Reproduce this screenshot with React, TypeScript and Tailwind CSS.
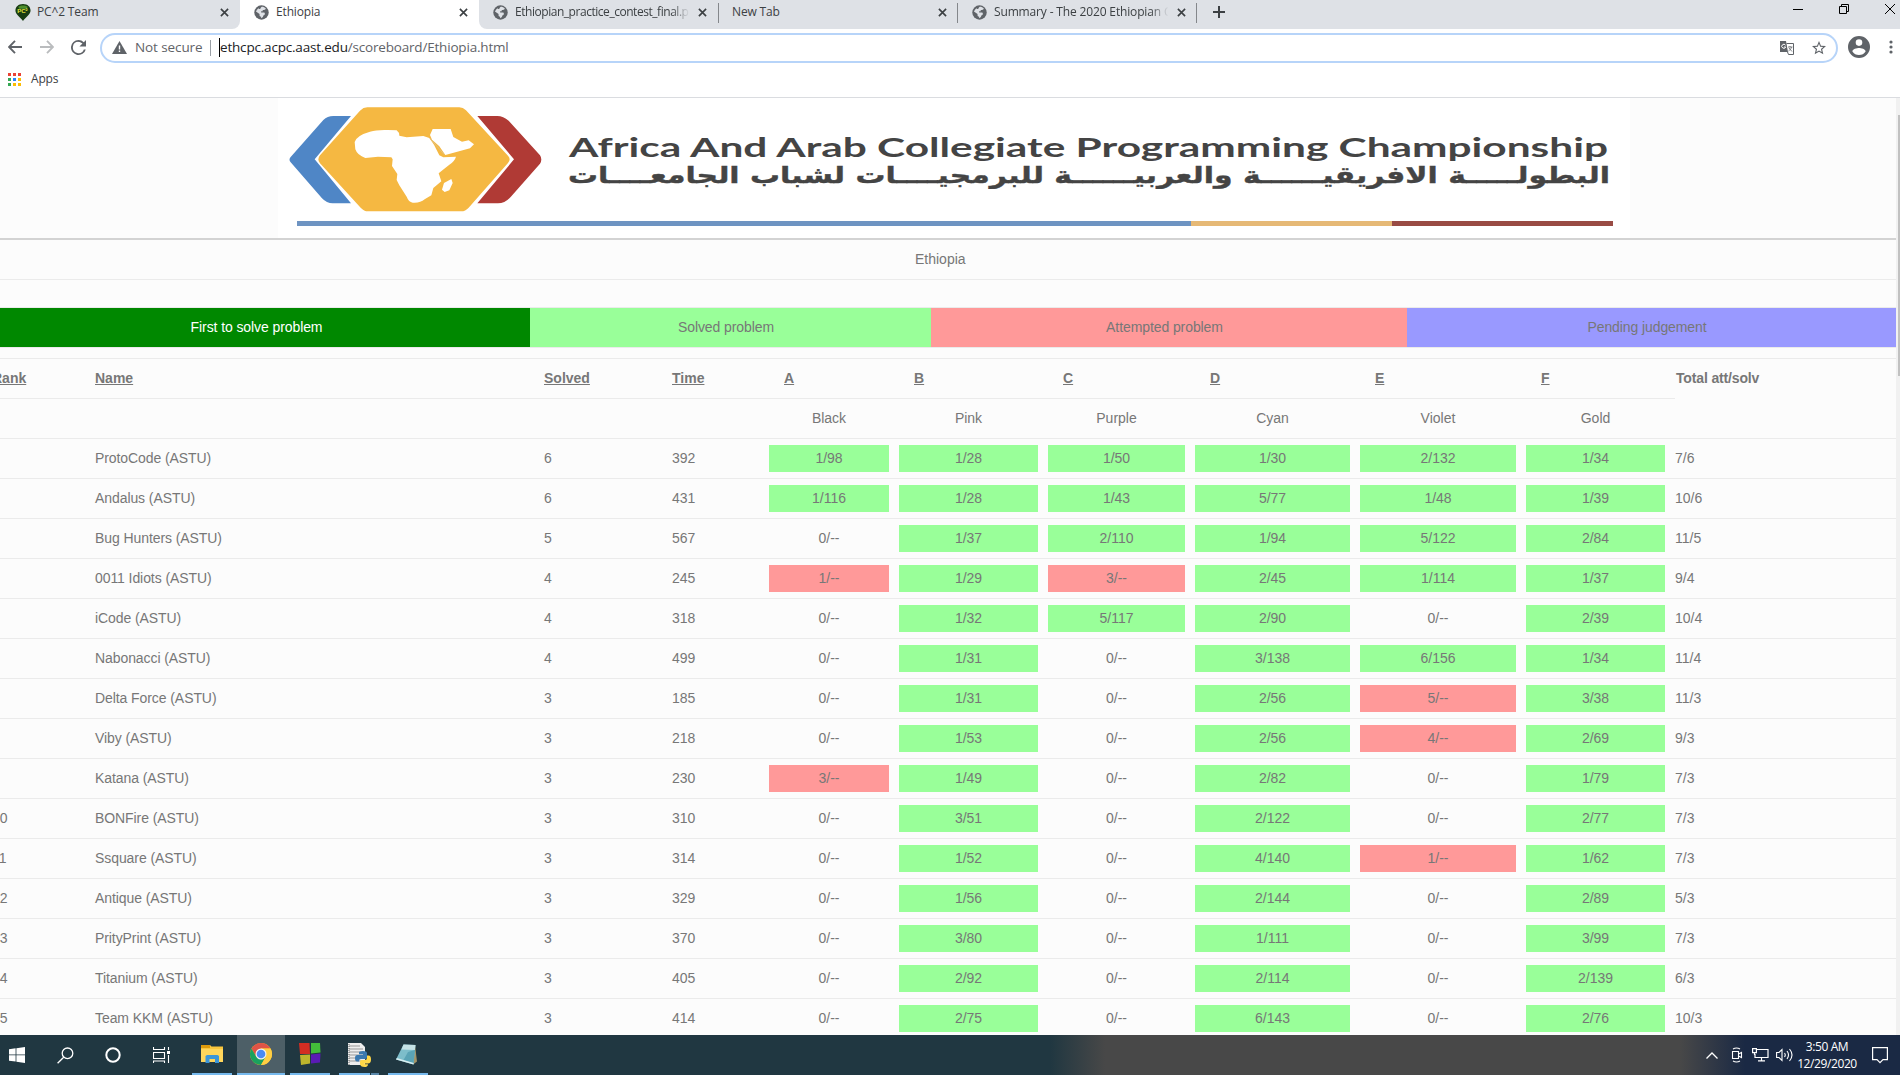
import React from "react";

type Row = [string, string, string, string, string[], string];

// A leading "!" marks an attempted but unsolved problem.
const rows: Row[] = [
  ["1", "ProtoCode (ASTU)", "6", "392", ["1/98", "1/28", "1/50", "1/30", "2/132", "1/34"], "7/6"],
  ["2", "Andalus (ASTU)", "6", "431", ["1/116", "1/28", "1/43", "5/77", "1/48", "1/39"], "10/6"],
  ["3", "Bug Hunters (ASTU)", "5", "567", ["0/--", "1/37", "2/110", "1/94", "5/122", "2/84"], "11/5"],
  ["4", "0011 Idiots (ASTU)", "4", "245", ["!1/--", "1/29", "!3/--", "2/45", "1/114", "1/37"], "9/4"],
  ["5", "iCode (ASTU)", "4", "318", ["0/--", "1/32", "5/117", "2/90", "0/--", "2/39"], "10/4"],
  ["6", "Nabonacci (ASTU)", "4", "499", ["0/--", "1/31", "0/--", "3/138", "6/156", "1/34"], "11/4"],
  ["7", "Delta Force (ASTU)", "3", "185", ["0/--", "1/31", "0/--", "2/56", "!5/--", "3/38"], "11/3"],
  ["8", "Viby (ASTU)", "3", "218", ["0/--", "1/53", "0/--", "2/56", "!4/--", "2/69"], "9/3"],
  ["9", "Katana (ASTU)", "3", "230", ["!3/--", "1/49", "0/--", "2/82", "0/--", "1/79"], "7/3"],
  ["10", "BONFire (ASTU)", "3", "310", ["0/--", "3/51", "0/--", "2/122", "0/--", "2/77"], "7/3"],
  ["11", "Ssquare (ASTU)", "3", "314", ["0/--", "1/52", "0/--", "4/140", "!1/--", "1/62"], "7/3"],
  ["12", "Antique (ASTU)", "3", "329", ["0/--", "1/56", "0/--", "2/144", "0/--", "2/89"], "5/3"],
  ["13", "PrityPrint (ASTU)", "3", "370", ["0/--", "3/80", "0/--", "1/111", "0/--", "3/99"], "7/3"],
  ["14", "Titanium (ASTU)", "3", "405", ["0/--", "2/92", "0/--", "2/114", "0/--", "2/139"], "6/3"],
  ["15", "Team KKM (ASTU)", "3", "414", ["0/--", "2/75", "0/--", "6/143", "0/--", "2/76"], "10/3"],
];

const cols =
  "grid grid-cols-[103px_449px_128px_97px_130px_149px_147px_165px_166px_149px_221px] items-center h-10 border-t border-[#ebebeb]";

function cellColor(v: string) {
  if (v.startsWith("!")) return "bg-[#ff9999]";
  if (v.startsWith("0/")) return "";
  return "bg-[#99ff99]";
}

function Globe() {
  return (
    <svg viewBox="0 0 16 16" className="size-[15px] shrink-0">
      <circle cx="8" cy="8" r="7.700" fill="#5f6368" />
      <path
        fill="#dee1e6"
        d="M8.300 1.900c1.700 0 3.200.7 4.300 1.800-.2.900-.9 1.500-1.900 1.500H9.300v1.400H7.600v1.500h2.700c.8 0 1.300.5 1.300 1.300 0 1.200-.9 1.600-1.600 1.900-.3 1.300-1 2.600-2.400 2.800v-1.700c-1.200 0-1.700-.7-1.700-1.700V9.500L2.100 6.800C2.600 5.600 3.600 4.400 4.700 3.500c.3.700 1 1 1.700.7.900-.4.700-1.800 1.900-2.300z"
      />
    </svg>
  );
}

function Close() {
  return (
    <svg viewBox="0 0 10 10" className="size-[9px] shrink-0" stroke="#3c4043" strokeWidth="1.800">
      <path d="M1 1l8 8M9 1L1 9" />
    </svg>
  );
}

function Tab({ title, icon, active, fade, tight }: { title: string; icon?: React.ReactNode; active?: boolean; fade?: boolean; tight?: boolean }) {
  return (
    <div className={active ? "flex h-full w-[239px] items-center bg-white pb-[5px] pl-[13px] pr-[11px]" : "flex h-full w-[239px] items-center pb-[5px] pl-[13px] pr-[11px]"}>
      {icon && <span className="mr-[6px] flex w-[17px] justify-center">{icon}</span>}
      <span
        className={
          fade
            ? "w-[178px] overflow-hidden whitespace-nowrap [mask-image:linear-gradient(to_right,black_88%,transparent_98%)]"
            : "flex-1 whitespace-nowrap"
        }
      >
        <span className={tight ? "tracking-[-0.46px]" : ""}>{title}</span>
      </span>
      <span className="ml-auto">
        <Close />
      </span>
    </div>
  );
}

function TabStrip() {
  return (
    <div className="flex h-[29px] items-center bg-[#dee1e6] text-[12px] tracking-[-0.15px] text-[#3c4043]">
      <div className="h-full bg-white">
        <div className="h-full rounded-br-lg bg-[#dee1e6] pl-px">
          <Tab
            title="PC^2 Team"
            icon={
              <svg viewBox="0 0 16 18" className="h-[17px] w-4">
                <path d="M8 0C3 0 0 3 0 7c0 4 5 7 8 11 3-4 8-7 8-11 0-4-3-7-8-7z" fill="#183c12" />
                <path d="M3 3c3-2 7-2 10 0l-1 2H4z" fill="#4d8f2c" />
                <text x="2" y="10" fontSize="6.500" fontWeight="700" fill="#e4e43a" fontFamily="Liberation Sans, sans-serif">PC²</text>
              </svg>
            }
          />
        </div>
      </div>
      <div className="h-full bg-white">
        <Tab title="Ethiopia" icon={<Globe />} active />
      </div>
      <div className="h-full bg-white">
        <div className="h-full rounded-bl-lg bg-[#dee1e6]">
          <Tab title="Ethiopian_practice_contest_final.pdf" icon={<Globe />} fade tight />
        </div>
      </div>
      <div className="mb-[4px] h-5 w-px bg-[#84878b]" />
      <div className="-mr-px h-full"><Tab title="New Tab" /></div>
      <div className="mb-[4px] h-5 w-px bg-[#84878b]" />
      <div className="-mr-px h-full"><Tab title="Summary - The 2020 Ethiopian Collegiate" icon={<Globe />} fade /></div>
      <div className="mb-[4px] h-5 w-px bg-[#84878b]" />
      <svg viewBox="0 0 12 12" className="mb-[5px] ml-4 size-3" stroke="#3c4043" strokeWidth="2">
        <path d="M6 0v12M0 6h12" />
      </svg>
      <div className="mb-[11px] ml-auto flex items-center pr-[5px]">
        <svg viewBox="0 0 10 10" className="mr-9 size-[10px]" stroke="#000"><path d="M0 5.500h10" /></svg>
        <svg viewBox="0 0 10 10" className="mr-9 size-[10px]" fill="none" stroke="#000"><path d="M.5 2.500h7v7h-7zM2.500 2.500v-2h7v7h-2" /></svg>
        <svg viewBox="0 0 10 10" className="size-[10px]" stroke="#000"><path d="M0 0l10 10M10 0L0 10" /></svg>
      </div>
    </div>
  );
}

function Toolbar() {
  return (
    <div className="flex h-[36px] items-center bg-white pl-[8px] pr-[6px]">
      <svg viewBox="0 0 12 12" className="size-[14px]" fill="none" stroke="#5f6368" strokeWidth="1.600"><path d="M12 6H1M6 .7L.9 6 6 11.300" /></svg>
      <svg viewBox="0 0 12 12" className="ml-[18px] size-[14px]" fill="none" stroke="#babcbe" strokeWidth="1.600"><path d="M0 6h11M6 .7L11.100 6 6 11.300" /></svg>
      <svg viewBox="4 4 16 16" className="ml-[17px] size-[15px]" fill="#5f6368">
        <path d="M17.650 6.350A7.960 7.960 0 0 0 12 4a8 8 0 1 0 7.730 10h-2.080A6 6 0 1 1 12 6c1.660 0 3.140.69 4.220 1.780L13 11h7V4l-2.350 2.350z" />
      </svg>
      <div className="ml-[14px] mt-[1px] flex h-[30px] w-[1738px] shrink-0 items-center rounded-full border-2 border-[#b7d4f9] pl-[10px] pr-[10px] text-[#5f6368]">
        <svg viewBox="0 0 15 13" className="h-[13px] w-[15px]"><path d="M7.500 0L15 13H0z" fill="#5f6368" /><path d="M6.800 4.500h1.400v4H6.800zM6.800 9.600h1.400V11H6.800z" fill="#fff" /></svg>
        <span className="ml-[8px] w-[68px] whitespace-nowrap text-[13.500px] tracking-[-0.1px]">Not secure</span>
        <span className="ml-[7px] h-4 w-px bg-[#9aa0a6]" />
        <span className="ml-[8px] h-[19px] w-px bg-black" />
        <span className="whitespace-nowrap text-[13.500px] tracking-[-0.19px]"><span className="text-[#202124]">ethcpc.acpc.aast.edu</span>/scoreboard/Ethiopia.html</span>
        <svg viewBox="0 0 14 14" className="ml-auto size-[14px]">
          <path d="M0 0h6l2 11H0z" fill="#5f6368" />
          <path d="M6.500 2.500h7v11h-5l-1-2.500" fill="none" stroke="#5f6368" />
          <path d="M5.500 4.200A2 2 0 1 0 5.700 6H4" fill="none" stroke="#fff" />
          <path d="M8 6h4.500M10 5v1M11.500 6c-.5 2-1.500 3-3 4M9 7l3 3.500" fill="none" stroke="#5f6368" strokeWidth=".8" />
        </svg>
        <svg viewBox="2 2 20 20" className="ml-[18px] size-[14px]" fill="#5f6368">
          <path d="M22 9.240l-7.190-.62L12 2 9.190 8.630 2 9.240l5.460 4.730L5.820 21 12 17.270 18.180 21l-1.630-7.030L22 9.240zM12 15.400l-3.760 2.270 1-4.280-3.320-2.880 4.380-.38L12 6.100l1.710 4.040 4.380.38-3.320 2.880 1 4.280L12 15.400z" />
        </svg>
      </div>
      <svg viewBox="2 2 20 20" className="ml-auto mr-[18px] size-[22px]" fill="#5f6368">
        <path d="M12 2a10 10 0 1 0 0 20 10 10 0 0 0 0-20zm0 3a3 3 0 1 1 0 6 3 3 0 0 1 0-6zm0 14.200a7.200 7.200 0 0 1-6-3.220c.03-1.990 4-3.080 6-3.080s5.970 1.090 6 3.080a7.200 7.200 0 0 1-6 3.220z" />
      </svg>
      <svg viewBox="0 0 6 14" className="h-[14px] w-[6px]" fill="#5f6368"><circle cx="3" cy="2" r="1.600" /><circle cx="3" cy="7" r="1.600" /><circle cx="3" cy="12" r="1.600" /></svg>
    </div>
  );
}

const appDots = ["#ea4335", "#ea4335", "#ea4335", "#34a853", "#2684fc", "#fbbc04", "#34a853", "#fbbc04", "#fbbc04"];

function Bookmarks() {
  return (
    <div className="flex h-[33px] items-center border-b border-[#dadce0] bg-white pb-[4px] pl-2 text-[12px] tracking-[-0.2px] text-[#3c4043]">
      <div className="grid grid-cols-3 gap-[2px]">
        {appDots.map((c, i) => (
          <span key={i} className="size-[3px]" style={{ background: c }} />
        ))}
      </div>
      <span className="ml-[10px]">Apps</span>
    </div>
  );
}

function Banner() {
  return (
    <div className="flex h-[142px] border-b-2 border-[#d3d3d3] pl-[278px]">
      <svg viewBox="278 98 1352 140" className="h-[140px] w-[1352px] bg-white">
        <g transform="translate(270 95) scale(.33333)">
          <path d="M243 63h-53q-18 0-30 12L62 186q-7 8 0 16l94 108q14 15 32 15h55L134 193z" fill="#4f86c6" />
          <path d="M622 63h60q18 0 34 14l94 104q8 12 0 25l-86 98q-18 21-40 21h-62L732 193z" fill="#b03a35" />
          <path d="M292 37h276q11 0 20 9l126 136q10 11 0 22L596 338q-10 11-22 11H294q-12 0-22-11L150 205q-10-12 0-24L270 47q10-10 22-10z" fill="#f5b842" />
          <path
            d="M300 110q20-6 52-5l28 1q8 6 8 16l22 5 50-4 18 6 14 20 16 32 12 6 38-2q-4 14-20 24l-32 26 8 24-24 20-6 22-20 12q-14 12-36 10-12-2-18-18l-22-34-8-16 2-18-16-24 2-20-4-6-40-2-38 4q-24-8-30-26l-2-22q6-20 46-31z"
            fill="#fff"
          />
          <path d="M480 120l8-18h54l8 24 26 14 20-4 16 12-12 12-30 8-44 12-18-26-22-20z" fill="#fff" />
          <path d="M480 130l42 48" stroke="#e0c080" strokeWidth="3" />
          <path d="M544 252l4 12-10 22-14 5-8-7 6-20z" fill="#fff" />
        </g>
        <text x="569" y="157" fontSize="26.500" fontWeight="700" fill="#444" fontFamily="Lato, sans-serif" textLength="1039" lengthAdjust="spacingAndGlyphs">
          Africa And Arab Collegiate Programming Championship
        </text>
        <text x="1610" y="182.500" direction="rtl" fontSize="23" fontWeight="700" fill="#444" stroke="#444" strokeWidth=".4" fontFamily="DejaVu Sans, sans-serif" textLength="1042" lengthAdjust="spacingAndGlyphs">
          البطولـــــة الافريقيــــــة والعربيــــــة للبرمجيــــات لشباب الجامعــــات
        </text>
        <path d="M297 223.500h894" stroke="#6e94c2" strokeWidth="5" />
        <path d="M1191 223.500h201" stroke="#e6b976" strokeWidth="5" />
        <path d="M1392 223.500h221" stroke="#994b44" strokeWidth="5" />
      </svg>
    </div>
  );
}

function Scoreboard() {
  return (
    <div className="w-[1904px] -ml-2 text-[14px] text-[#777]">
      <div className="h-[39px] pl-[923px] pt-[9px] leading-5">Ethiopia</div>
      <div className="h-[28px] border-t border-[#ebebeb]" />
      <div className="flex h-[41px] border-y border-[#ebebeb] text-center leading-[38px] tracking-[-0.09px]">
        <div className="w-[538px] bg-[#008800] pr-[9px] text-white">First to solve problem</div>
        <div className="w-[401px] bg-[#99ff99] pr-[9px]">Solved problem</div>
        <div className="w-[476px] bg-[#ff9999] pr-[9px]">Attempted problem</div>
        <div className="flex-1 bg-[#9999ff] pr-[9px]">Pending judgement</div>
      </div>
      <div className="h-[10px]" />
      <div className={cols + " font-bold"}>
        <span className="underline">Rank</span>
        <span className="underline">Name</span>
        <span className="underline">Solved</span>
        <span className="underline">Time</span>
        {["A", "B", "C", "D", "E", "F"].map((l) => (
          <span key={l} className="pl-[15px] underline">{l}</span>
        ))}
        <span className="pl-px tracking-[-0.15px]">Total att/solv</span>
      </div>
      <div className="flex h-10 items-center">
        <div className="flex h-full w-[1683px] items-center border-t border-[#ebebeb] pl-[777px] text-center">
          <span className="w-[120px]">Black</span>
          <span className="ml-[10px] w-[139px]">Pink</span>
          <span className="ml-[10px] w-[137px]">Purple</span>
          <span className="ml-[10px] w-[155px]">Cyan</span>
          <span className="ml-[10px] w-[156px]">Violet</span>
          <span className="ml-[10px] w-[139px]">Gold</span>
        </div>
      </div>
      {rows.map(([rank, name, solved, time, cells, total]) => (
        <div key={rank} className={cols}>
          <span>{rank}</span>
          <span className="tracking-[-0.08px]">{name}</span>
          <span>{solved}</span>
          <span>{time}</span>
          {cells.map((v, i) => (
            <span key={i} className={"mr-[10px] h-[27px] text-center leading-[26px] " + cellColor(v)}>
              {v.replace("!", "")}
            </span>
          ))}
          <span>{total}</span>
        </div>
      ))}
    </div>
  );
}

function Taskbar() {
  return (
    <div className="flex h-10 items-center bg-[linear-gradient(90deg,#203741_0,#203741_1050px,#484848_1105px,#484848_1680px,#1a2944_1745px,#1a2944_1900px)] text-white">
      <svg viewBox="0 0 16 16" className="ml-[9px] size-4" fill="#fff"><path d="M0 2.200L6.600 1.300v6.200H0zM7.400 1.200L16 0v7.500H7.400zM0 8.300h6.600v6.300L0 13.700zM7.400 8.300H16V16l-8.600-1.200z" /></svg>
      <svg viewBox="0 0 17 17" className="ml-[32px] size-[17px]" fill="none" stroke="#fff" strokeWidth="1.300"><circle cx="10.500" cy="6.300" r="5.300" /><path d="M6.700 10.200L.6 16.300" /></svg>
      <svg viewBox="0 0 16 16" className="ml-[31px] size-4" fill="none" stroke="#fff" strokeWidth="2"><circle cx="8" cy="8" r="6.700" /></svg>
      <svg viewBox="0 0 17 16" className="ml-[32px] mr-[22px] h-4 w-[17px]" fill="none" stroke="#fff" strokeWidth="1.100"><path d="M.5 0v2.500h11V0M.5 5.500h11v6H.5zM.5 16v-2h11v2M15.500 0v3M15.500 8v8" /><path d="M14 4h3v3h-3z" fill="#fff" stroke="none" /></svg>
      <div className="flex h-full w-10 items-center justify-center border-b-2 border-[#76b9ed]">
        <svg viewBox="0 0 22 18" className="h-[18px] w-[22px]">
          <path d="M0 0h9l1.500 1.500H22V17H0z" fill="#f9c63d" /><path d="M0 0h9v3H0z" fill="#dd9a0c" /><path d="M0 4h22v13H0z" fill="#ffd65c" /><path d="M4.500 18v-7l1.500-1h10.500l1.500 1v7h-4v-4H8.500v4z" fill="#3c96d9" />
        </svg>
      </div>
      <div className="ml-[5px] flex h-full w-12 items-center justify-center border-b-2 border-[#76b9ed] bg-[#4d5f67]">
        <svg viewBox="0 0 24 24" className="size-6">
          <circle cx="12" cy="12" r="11" fill="#fbc116" />
          <path d="M2.500 6.500A11 11 0 0 1 21.530 6.500H12L7.240 14.750z" fill="#de5347" />
          <path d="M2.470 6.500A11 11 0 0 0 12 23l4.760-8.250L12 17.500l-4.760-2.750z" fill="#1aa15f" />
          <path d="M12 6.500h9.530A11 11 0 0 1 12 23l4.760-8.250z" fill="#ffce44" />
          <circle cx="12" cy="12" r="5.500" fill="#f1f1f1" /><circle cx="12" cy="12" r="4.300" fill="#4a8af4" />
        </svg>
      </div>
      <div className="ml-[5px] flex h-full w-10 items-center justify-center border-b-2 border-[#76b9ed]">
        <svg viewBox="0 0 22 24" className="h-6 w-[22px]">
          <path d="M0 1h10.500l.5 11H1z" fill="#d32d22" /><path d="M12 1h9l.5 9.500-9.500 1z" fill="#43bd3a" /><path d="M1 13l10-.5v9L2 23z" fill="#bdb52d" /><path d="M12 12.500l9.500-1-.5 9-9 1z" fill="#5a1bb5" />
        </svg>
      </div>
      <div className="ml-[9px] flex h-full w-10 flex-col">
        <svg viewBox="0 0 24 24" className="ml-[8px] mt-[8px] size-6">
          <path d="M1 0h13l4 4v18H1z" fill="#eee" /><path d="M2 3h11M2 6h14M2 9h14M2 12h14M2 15h14M2 18h14" stroke="#999" /><path d="M2 1v21" stroke="#666" strokeDasharray="1 1" />
          <path d="M12 9.500q0-1.500 4-1.500t4 2v4q0 2-2 2h-4q-2 0-2 2v.5h-2q-2 0-2-3.500t3-3h5v-.8h-4z" fill="#3b79b0" />
          <path d="M20 12.500h1.500q2.500 0 2.500 4t-3 4h-3.500v.7H21q0 2.800-3.500 2.800T13 21.500v-3q0-1.500 2-1.500h3q2 0 2-2z" fill="#ffd748" />
        </svg>
        <div className="mt-auto flex h-[2px]"><span className="w-[31px] bg-[#76b9ed]" /><span className="ml-px w-2 bg-[#5a88ab]" /></div>
      </div>
      <div className="ml-[9px] flex h-full w-10 items-center justify-center border-b-2 border-[#76b9ed]">
        <svg viewBox="0 0 24 24" className="-ml-[2px] size-[24px]">
          <path d="M20 3l2 16.500-4 3z" fill="#a39468" />
          <path d="M8.500 2.500l12 .5-2 19.500L1 17.500z" fill="#7dbdca" />
          <path d="M8.500 2.500l12 .5-.6 5-13.400-.5z" fill="#c5e2e6" />
          <path d="M13 10l7-2-1.500 13-10-3z" fill="#5aa3b5" />
          <path d="M1 17.500l17.500 5 .1-1.500L1.800 16z" fill="#d8eef0" />
        </svg>
      </div>
      <div className="ml-auto flex items-center pr-[12px]">
        <svg viewBox="0 0 12 7" className="h-[7px] w-3" fill="none" stroke="#fff" strokeWidth="1.300"><path d="M.5 6.500L6 1l5.500 5.500" /></svg>
        <svg viewBox="0 0 12 16" className="ml-[13px] h-4 w-3" fill="none" stroke="#fff" strokeWidth="1.100"><path d="M1.500 4.500h6v7h-6zM7.500 7l3-1.500v5L7.500 9M2 2q3.500-2 7 0M2 14q3.500 2 7 0" /></svg>
        <svg viewBox="0 0 17 14" className="ml-[9px] h-[14px] w-[17px]" fill="none" stroke="#fff" strokeWidth="1.200"><path d="M5 1.500h11v8H3V6M9.500 9.500v3M6 12.900h7M.6.600h3.800v4H.6zM2.500 4.500V7" /></svg>
        <svg viewBox="0 0 17 14" className="ml-[7px] h-[14px] w-[17px]" fill="none" stroke="#fff" strokeWidth="1.100"><path d="M.6 4.500H3L6 1.500v11L3 9.500H.6zM8.500 5q1.500 2 0 4M11 3q3 4 0 8M13.500 1q5 6 0 12" /></svg>
        <div className="ml-[3px] w-[62px] text-center text-[12px] leading-[17px] tracking-[-0.4px]">
          <div>3:50 AM</div>
          <div>12/29/2020</div>
        </div>
        <svg viewBox="0 0 16 17" className="ml-[14px] h-[17px] w-4" fill="none" stroke="#fff" strokeWidth="1.200"><path d="M.6.600h14.800v12H11l-3 3-3-3H.6z" /></svg>
      </div>
    </div>
  );
}

export default function App() {
  return (
    <div className="flex h-[1075px] w-[1900px] flex-col overflow-hidden bg-white font-['Open_Sans',sans-serif]">
      <TabStrip />
      <Toolbar />
      <Bookmarks />
      <div className="flex h-[937px] font-['Liberation_Sans',sans-serif]">
        <main className="h-full w-[1896px] overflow-hidden bg-[#fcfcfc]">
          <Banner />
          <Scoreboard />
        </main>
        <div className="h-full w-1 bg-[#f1f1f1] pl-[2px] pt-[17px]">
          <div className="h-[261px] bg-[#c1c1c1]" />
        </div>
      </div>
      <Taskbar />
    </div>
  );
}
